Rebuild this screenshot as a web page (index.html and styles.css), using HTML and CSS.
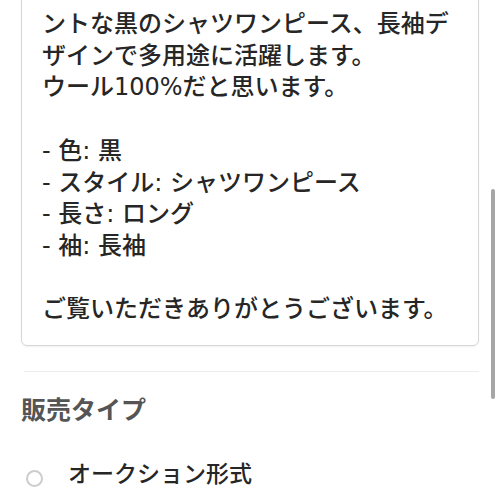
FILE: index.html
```html
<!DOCTYPE html>
<html lang="ja">
<head>
<meta charset="utf-8">
<link rel="stylesheet" href="styles.css">
</head>
<body>
<div class="page">
  <div class="desc">
    <div class="line">ントな黒のシャツワンピース、長袖デ</div>
    <div class="line">ザインで多用途に活躍します。</div>
    <div class="line">ウール100%だと思います。</div>
    <div class="line">&nbsp;</div>
    <div class="line">- 色: 黒</div>
    <div class="line">- スタイル: シャツワンピース</div>
    <div class="line">- 長さ: ロング</div>
    <div class="line">- 袖: 長袖</div>
    <div class="line">&nbsp;</div>
    <div class="line">ご覧いただきありがとうございます。</div>
  </div>
  <hr class="divider">
  <h2 class="section-title">販売タイプ</h2>
  <label class="radio-row">
    <span class="radio"></span>
    <span class="radio-label">オークション形式</span>
  </label>
</div>
<div class="scrollbar"></div>
</body>
</html>
```
FILE: styles.css
```css
html, body {
  margin: 0;
  padding: 0;
  background: #fff;
  overflow: hidden;
}
body {
  width: 500px;
  height: 500px;
  font-family: "DejaVu Sans", "Noto Sans CJK JP", sans-serif;
  color: #262626;
}
.page {
  padding: 0 21px;
}
.desc {
  margin-top: -12px;
  border: 1px solid #d6d6d6;
  border-radius: 6px;
  padding: 20px 20px 19px 20px;
  box-shadow: 0 1px 2px rgba(0,0,0,0.06);
}
.line {
  font-size: 24px;
  line-height: 31.7px;
  white-space: pre;
  font-weight: 500;
}
.divider {
  border: none;
  border-top: 1px solid #ececec;
  margin: 25px 0 0 3px;
}
.section-title {
  margin: 20px 0 0 0;
  font-size: 25px;
  line-height: 38px;
  font-weight: 700;
  color: #555;
}
.radio-row {
  display: flex;
  align-items: center;
  margin-top: 28px;
}
.radio {
  width: 17px;
  height: 17px;
  border: 2px solid #cdcdcd;
  border-radius: 50%;
  margin: 8px 0 0 5px;
  box-sizing: border-box;
}
.radio-label {
  margin-left: 25px;
  font-size: 23px;
  line-height: 32px;
  font-weight: 500;
}
.scrollbar {
  position: absolute;
  left: 491px;
  top: 189px;
  width: 4px;
  height: 210px;
  background: #a6a6a6;
  border-radius: 2px;
}
```
